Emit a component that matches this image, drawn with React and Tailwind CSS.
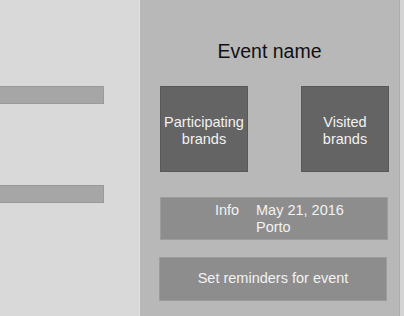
import React from "react";

const font = { fontFamily: '"Liberation Sans", Arial, sans-serif' };

function SideBar() {
  return (
    <div className="w-[140px] h-full bg-[#d9d9d9] border-r border-[#e0e0e0] pt-[86px]">
      <div className="w-[104px] h-[18px] bg-[#a6a6a6] border border-[#9a9a9a] border-l-0" />
      <div className="w-[104px] h-[18px] bg-[#a6a6a6] border border-[#9a9a9a] border-l-0 mt-[81px]" />
    </div>
  );
}

function BrandBox({ children }) {
  return (
    <div className="w-[88px] h-[86px] bg-[#646464] border border-[#585858] flex items-center justify-center text-center text-[14.5px] leading-[17px] text-[#f2f2f2] pt-[4px]">
      {children}
    </div>
  );
}

function App() {
  return (
    <div className="w-[404px] h-[316px] flex bg-[#d6d6d6] overflow-hidden" style={font}>
      <SideBar />

      <div className="w-[260px] h-full bg-[#b8b8b8] border-r border-[#acacac] flex flex-col">
        {/* Title */}
        <div className="pt-[40px] text-center text-[19.5px] leading-[23px] text-[#111]">
          Event name
        </div>

        {/* Brand tiles */}
        <div className="mt-[23px] pl-[20px] flex gap-[53px]">
          <BrandBox>
            Participating
            <br />
            brands
          </BrandBox>
          <BrandBox>
            Visited
            <br />
            brands
          </BrandBox>
        </div>

        {/* Info */}
        <div className="mt-[25px] ml-[20px] w-[228px] h-[43px] bg-[#8d8d8d] border border-[#9c9c9c] flex pt-[4px] text-[14.5px] leading-[17px] text-[#f2f2f2]">
          <span className="ml-[54px] w-[41px]">Info</span>
          <span>
            May 21, 2016
            <br />
            Porto
          </span>
        </div>

        {/* Reminders */}
        <div className="mt-[17px] ml-[19px] w-[228px] h-[44px] bg-[#8d8d8d] border border-[#9c9c9c] flex items-center justify-center text-[14.5px] text-[#f2f2f2]">
          Set reminders for event
        </div>
      </div>

      <div className="flex-1 h-full bg-[#d4d4d4]" />
    </div>
  );
}

export default App;
